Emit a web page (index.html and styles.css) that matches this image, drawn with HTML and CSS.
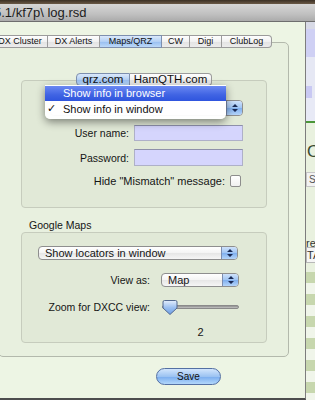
FILE: index.html
```html
<!DOCTYPE html>
<html>
<head>
<meta charset="utf-8">
<link rel="stylesheet" href="styles.css">
</head>
<body>
<div class="desk"></div>
<div class="titlebar"><span class="title">5.1/kf7p\ log.rsd</span></div>
<div class="main">
  <div class="sheet">
    <div class="tabs">
      <div class="tab t-dx">DX Cluster</div>
      <div class="tab t-alerts">DX Alerts</div>
      <div class="tab t-maps sel">Maps/QRZ</div>
      <div class="tab t-cw">CW</div>
      <div class="tab t-digi">Digi</div>
      <div class="tab t-club">ClubLog</div>
    </div>
    <div class="tabbox">
      <div class="subtabs">
        <div class="stab s-qrz sel">qrz.com</div>
        <div class="stab s-ham">HamQTH.com</div>
      </div>
      <div class="group g1">
        <div class="popup p-info">
          <span class="ptext"></span>
          <span class="arrows"><svg width="8" height="10" viewBox="0 0 8 10"><path d="M4 1 L7 4 H1Z M4 9 L7 6 H1Z" fill="#1a2a55"/></svg></span>
        </div>
        <div class="row r-user"><span class="lbl">User name:</span><div class="field"></div></div>
        <div class="row r-pass"><span class="lbl">Password:</span><div class="field"></div></div>
        <div class="row r-check"><span class="lbl2">Hide "Mismatch" message:</span><div class="check"></div></div>
        <div class="menu">
          <div class="mi hi"><span class="ck"></span>Show info in browser</div>
          <div class="mi"><span class="ck">✓</span>Show info in window</div>
        </div>
      </div>
      <div class="glabel">Google Maps</div>
      <div class="group g2">
        <div class="popup p-loc">
          <span class="ptext">Show locators in window</span>
          <span class="arrows"><svg width="8" height="10" viewBox="0 0 8 10"><path d="M4 1 L7 4 H1Z M4 9 L7 6 H1Z" fill="#1a2a55"/></svg></span>
        </div>
        <div class="row r-view"><span class="lbl">View as:</span>
          <div class="popup p-map">
            <span class="ptext">Map</span>
            <span class="arrows"><svg width="8" height="10" viewBox="0 0 8 10"><path d="M4 1 L7 4 H1Z M4 9 L7 6 H1Z" fill="#1a2a55"/></svg></span>
          </div>
        </div>
        <div class="row r-zoom"><span class="lbl">Zoom for DXCC view:</span>
          <div class="slider">
            <div class="track"></div>
            <svg class="knob" width="16" height="15" viewBox="0 0 16 15">
              <defs><linearGradient id="kg" x1="0" y1="0" x2="0" y2="1"><stop offset="0" stop-color="#e4eefc"/><stop offset="0.5" stop-color="#9cc0f0"/><stop offset="1" stop-color="#6c9ee6"/></linearGradient></defs>
              <path d="M2.5 0.5 H13.5 A1.5 1.5 0 0 1 15 2 V8 L8 14.5 L1 8 V2 A1.5 1.5 0 0 1 2.5 0.5Z" fill="url(#kg)" stroke="#52688f"/>
            </svg>
          </div>
        </div>
        <div class="value">2</div>
      </div>
    </div>
    <div class="footer"><div class="btn">Save</div></div>
  </div>
  <div class="back">
    <div class="b1"></div>
    <div class="b2"></div>
    <div class="b3"></div>
    <div class="b4"></div>
    <div class="b5"></div>
    <div class="bline"></div>
    <div class="b6"><span class="bO">O</span></div>
    <div class="b7">S</div>
    <div class="b8"></div>
    <div class="b9">re</div>
    <div class="b10">TA</div>
    <div class="stripes"></div>
  </div>
</div>
</body>
</html>
```

FILE: styles.css
```css
* { box-sizing: border-box; }
html, body { margin: 0; padding: 0; }
body {
  width: 315px; height: 400px; overflow: hidden;
  font-family: "Liberation Sans", Arial, sans-serif;
  font-size: 10.5px; color: #151515;
  background: #eef6e6;
}
.desk { height: 4px; background: linear-gradient(#3b3024, #6a5946); }
.titlebar {
  height: 18px; line-height: 17px; font-size: 13px; white-space: nowrap; overflow: hidden;
  background: linear-gradient(#d6d6d6, #c0c0c0 60%, #ababab);
  border-bottom: 1px solid #6e6e6e; color: #1c1c1c;
}
.title { display: inline-block; margin-left: -6px; }
.main { display: flex; height: 378px; }

.sheet {
  width: 306px; flex: none; display: flex; flex-direction: column;
  background: #edf5e4; border-right: 1px solid #7d7d7d; border-bottom: 2px solid #4d4d4d;
  overflow: hidden; padding-top: 13px;
}
.tabs { display: flex; height: 13px; position: relative; z-index: 2; }
.tab {
  flex: none; height: 13px; line-height: 11px; font-size: 9px; text-align: center; white-space: nowrap;
  background: linear-gradient(#fefefe, #f1f1f1 50%, #e3e3e3 51%, #ececec);
  border: 1px solid #9b9b9b; border-left: none; color: #111;
}
.tab.sel { background: linear-gradient(#dbe9fb, #b3d0f4 50%, #96bdf0 51%, #bcd9f8); border-color: #7d8fae; }
.t-dx { width: 56px; margin-left: -8px; border-left: 1px solid #9b9b9b; }
.t-alerts { width: 52px; }
.t-maps { width: 62px; }
.t-cw { width: 28px; }
.t-digi { width: 32px; }
.t-club { width: 50px; border-radius: 0 4px 4px 0; }

.tabbox {
  height: 315px; width: 291px; margin: -6px 0 0 -2px; flex: none;
  background: #e8f0df; border: 1px solid #b3b9ac; border-radius: 5px;
  padding-top: 30px; display: flex; flex-direction: column;
}
.subtabs { display: flex; justify-content: center; height: 13px; position: relative; z-index: 2; margin-left: 1px; }
.stab {
  height: 13px; line-height: 11px; font-size: 11.5px; text-align: center; white-space: nowrap;
  background: linear-gradient(#fefefe, #f1f1f1 50%, #e3e3e3 51%, #ececec);
  border: 1px solid #9b9b9b; color: #111;
}
.stab.sel { background: linear-gradient(#dbe9fb, #b3d0f4 50%, #96bdf0 51%, #bcd9f8); border-color: #7d8fae; border-radius: 4px 0 0 4px; }
.s-qrz { width: 54px; }
.s-ham { width: 82px; border-left: none; border-radius: 0 4px 4px 0; }

.group {
  position: relative; width: 246px; margin-left: 22px; flex: none;
  background: #e1e9d7; border: 1px solid #c6ccbd; border-radius: 4px;
  display: flex; flex-direction: column;
}
.g1 { height: 128px; margin-top: -6px; padding-top: 19px; }
.g2 { height: 111px; padding-top: 13px; }
.glabel { height: 13px; line-height: 13px; margin: 11px 0 0 30px; }

.row { display: flex; align-items: center; }
.lbl { width: 107px; text-align: right; white-space: nowrap; }
.field {
  width: 109px; height: 100%; margin-left: 5px;
  background: #d5d5fd; border: 1px solid #aeb0c8; border-top-color: #8e90aa;
}
.r-user { height: 16px; margin-top: 9px; }
.r-pass { height: 17px; margin-top: 8px; }
.r-check { height: 12px; margin-top: 9px; justify-content: flex-end; padding-right: 25px; }
.lbl2 { white-space: nowrap; font-size: 11px; margin-right: 5px; }
.check { width: 11px; height: 12px; background: linear-gradient(#ffffff, #f0f0f0); border: 1px solid #8d8d8d; border-radius: 2px; }

.popup {
  display: flex; align-items: center; position: relative;
  background: linear-gradient(#ffffff, #f4f4f4 50%, #e6e6e6 51%, #f6f6f6);
  border: 1px solid #8e8e8e; border-radius: 4px; font-size: 11px; overflow: hidden;
}
.ptext { flex: 1; padding-left: 6px; white-space: nowrap; }
.arrows {
  width: 16px; height: 100%; display: flex; align-items: center; justify-content: center;
  background: linear-gradient(#cfe2fb, #9fc4f3 50%, #7eaeee 51%, #b5d5fa);
  border-left: 1px solid #7c8db0;
}
.p-info { height: 16px; width: 193px; margin-left: 28px; }
.p-loc { height: 14px; width: 200px; margin-left: 16px; }
.p-map { height: 14px; width: 78px; margin-left: 11px; }

.menu {
  position: absolute; left: 23px; top: 4px; width: 181px; height: 34px;
  background: rgba(255,255,255,0.97); border-radius: 0 0 5px 5px;
  box-shadow: 0 3px 8px rgba(0,0,0,0.45); padding-top: 1px; font-size: 11px; z-index: 3;
}
.mi { height: 16px; line-height: 16px; display: flex; white-space: nowrap; color: #111; }
.mi.hi { height: 15px; line-height: 15px; color: #fff; background: linear-gradient(#6a88f2, #3f63e3 60%, #2f55de); }
.ck { width: 18px; padding-left: 2px; font-family: "DejaVu Sans", sans-serif; font-size: 11px; }

.r-view { height: 14px; margin-top: 13px; }
.r-view .lbl, .r-zoom .lbl { width: 128px; }
.r-zoom { height: 16px; margin-top: 12px; }
.slider { position: relative; width: 77px; height: 16px; margin-left: 12px; }
.track {
  position: absolute; left: 0; right: 0; top: 6px; height: 4px; border-radius: 2px;
  background: linear-gradient(#8e8e8e, #c4c4c4); border: 1px solid #8a8a8a;
}
.knob { position: absolute; left: 0; top: 1px; }
.value { height: 14px; line-height: 14px; margin: 10px 0 0 140px; width: 77px; text-align: center; font-size: 11px; }

.footer { flex: 1; padding: 11px 0 0 156px; }
.btn {
  width: 65px; height: 17px; line-height: 15px; text-align: center; font-size: 10px;
  border: 1px solid #5470a3; border-radius: 9px; color: #111;
  background: linear-gradient(#d2e5fc, #9cc3f2 50%, #79acee 51%, #b2d7fb);
}

.back { flex: 1; display: flex; flex-direction: column; overflow: hidden; background: #e9f1df; font-size: 13px; }
.b1 { height: 7px; background: #d8dae6; }
.b2 { height: 28px; background: #cfd0f4; }
.b3 { height: 29px; background: #e6e8f4; }
.b4 { height: 12px; background: linear-gradient(90deg, #c9c9f3 6px, #e6e8f4 6px); }
.b5 { height: 23px; background: #e8eaf6; }
.bline { height: 2px; background: #4b9638; }
.b6 { height: 45px; padding-top: 21px; color: #3a4a30; line-height: 16px; font-size: 17px; white-space: nowrap; }
.bO { margin-left: 1px; }
.b7 { height: 15px; margin-top: 4px; border: 1px solid #c6c6c6; border-right: none; background: #f2f2f2; font-size: 10px; line-height: 13px; padding-left: 2px; color: #555; }
.b8 { height: 52px; }
.b9 { height: 8px; line-height: 8px; font-size: 11px; color: #333; white-space: nowrap; }
.b10 { height: 16px; border: 1px solid #b8b8b8; border-right: none; background: #f5f5f5; font-size: 11px; line-height: 14px; color: #333; }
.stripes { flex: 1; margin-top: 9px; background: repeating-linear-gradient(#c7d7ae 0 11px, #f0f5ea 11px 22px); }
```
